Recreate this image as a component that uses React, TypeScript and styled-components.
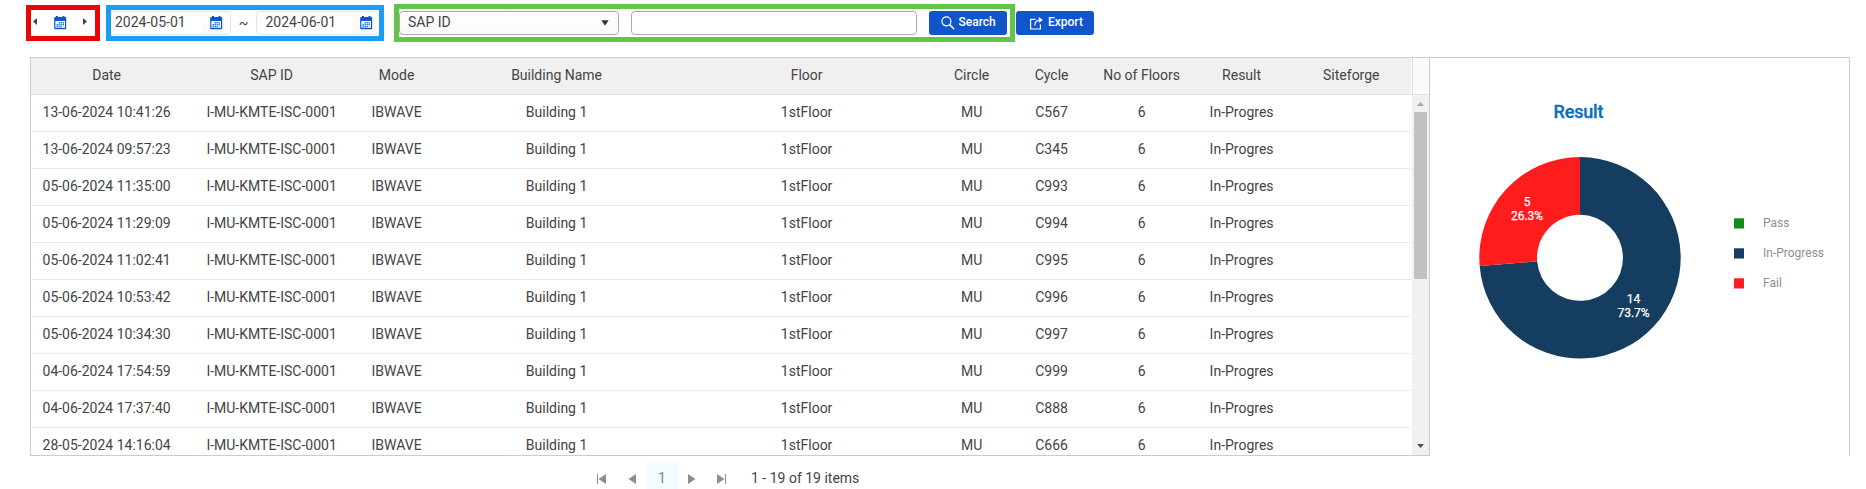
import React from "react";
import styled, { createGlobalStyle } from "styled-components";

const GlobalStyle = createGlobalStyle`
  * { box-sizing: border-box; }
  body { margin: 0; background: #fff; overflow: hidden; }
`;

const Page = styled.div`
  width: 1866px;
  height: 489px;
  font: 14px/20px Roboto, sans-serif;
  color: #444;
  overflow: hidden;
`;

const Toolbar = styled.div`
  display: flex;
  align-items: center;
  height: 46px;
  padding-left: 26px;
`;

const Group = styled.div<{ $color: string; $width: number; $height: number }>`
  display: flex;
  align-items: center;
  flex: none;
  width: ${(p) => p.$width}px;
  height: ${(p) => p.$height}px;
  border: 5px solid ${(p) => p.$color};
`;

const StepGroup = styled(Group)`
  justify-content: space-between;
  padding: 0 8px 0 2px;
  margin-right: 6px;
  svg { display: block; }
`;

const RangeGroup = styled(Group)`
  overflow: hidden;
  margin-right: 10px;
`;

const FilterGroup = styled(Group)`
  margin-right: 1px;
`;

const DateField = styled.div<{ $first?: boolean }>`
  display: flex;
  flex: none;
  width: ${(p) => (p.$first ? 120 : 126)}px;
  height: 24px;
  border: 1px solid #e6e6e6;
  border-left-width: ${(p) => (p.$first ? 0 : 1)}px;
  border-radius: ${(p) => (p.$first ? "0 4px 4px 0" : "4px")};
  overflow: hidden;
`;

const DateText = styled.span<{ $first?: boolean }>`
  flex: none;
  width: ${(p) => (p.$first ? 91 : 95)}px;
  padding-left: ${(p) => (p.$first ? 4 : 8.5)}px;
  line-height: 21px;
`;

const DateButton = styled.span`
  flex: 1;
  padding: 4px 0 0 8px;
  background: linear-gradient(#fff, #f9f9f9);
  svg { display: block; }
`;

const Tilde = styled.span`
  flex: none;
  width: 25px;
  text-align: center;
  line-height: 22px;
`;

const Select = styled.div`
  display: flex;
  align-items: center;
  justify-content: space-between;
  width: 220px;
  height: 24px;
  margin-right: 12px;
  padding: 0 9px 0 8px;
  border: 1px solid #aaa;
  border-radius: 4px;
  background: linear-gradient(#fff, #f9f9f9);
  line-height: 20px;
  span { height: 22px; }
`;

const Input = styled.input`
  width: 286px;
  height: 24px;
  margin: 0 12px 0 0;
  border: 1px solid #aaa;
  border-radius: 4px;
  background: #fff;
`;

const Button = styled.button<{ $inset: number }>`
  display: flex;
  align-items: center;
  flex: none;
  width: 78px;
  height: 24px;
  padding: 0 0 0 ${(p) => p.$inset}px;
  border: 0;
  border-radius: 3px;
  background: #1155cc;
  color: #fff;
  font: 500 12px/22px Roboto, sans-serif;
  svg { display: block; margin-right: 4px; }
  span { display: block; height: 24px; }
`;

const Panels = styled.div`
  display: flex;
  margin: 11px 0 0 30px;
  height: 399px;
`;

const Grid = styled.div`
  display: flex;
  flex-direction: column;
  width: 1400px;
  height: 399px;
  border: 1px solid #ccc;
`;

const GridHead = styled.div`
  display: flex;
  flex: none;
  height: 37px;
  border-bottom: 1px solid #e2e2e2;
  background: #fafafa;
`;

const HeadCells = styled.div`
  display: flex;
  width: 1380px;
  padding-left: 0.6px;
  background: #f0f0f0;
`;

const HeadSpacer = styled.div`
  width: 17px;
  margin-left: 1px;
  border-left: 1px solid #e2e2e2;
`;

const HeadCell = styled.div<{ $width: number }>`
  flex: none;
  width: ${(p) => p.$width}px;
  text-align: center;
  line-height: 34px;
`;

const GridBody = styled.div`
  display: flex;
  flex: 1;
  min-height: 0;
  overflow: hidden;
`;

const Rows = styled.div`
  width: 1381px;
  padding-left: 0.6px;
`;

const Row = styled.div`
  display: flex;
  height: 37px;
`;

const Cell = styled.div<{ $width: number }>`
  flex: none;
  width: ${(p) => p.$width}px;
  height: 37px;
  border-bottom: 1px solid #ebebeb;
  text-align: center;
  line-height: 35px;
`;

const ScrollTrack = styled.div`
  display: flex;
  flex-direction: column;
  align-items: center;
  justify-content: space-between;
  width: 17px;
  height: 360px;
  background: #f1f1f1;
  svg { display: block; }
`;

const ScrollThumb = styled.div`
  width: 13px;
  height: 167px;
  background: #c1c1c1;
`;

const ScrollTop = styled.div``;

const ChartPanel = styled.div`
  width: 420px;
  height: 399px;
  border-top: 1px solid #ccc;
  border-right: 1px solid #ccc;
  svg { display: block; }
`;

const Pager = styled.div`
  display: flex;
  align-items: center;
  height: 26px;
  margin: 7px 0 0 597px;
  svg { display: block; margin-top: 5px; }
`;

const PageNumber = styled.span`
  width: 32px;
  height: 26px;
  margin: 0 10px;
  background: #f3fbfe;
  color: #7a8794;
  line-height: 30px;
  text-align: center;
`;

const PageInfo = styled.span`
  margin-left: 25px;
  line-height: 30px;
  height: 26px;
  white-space: nowrap;
`;

const CalendarIcon = () => (
  <svg width="13" height="14" viewBox="0 0 13 14">
    <path d="M2 0h2v2H2zM8.500 0h2v2h-2z" fill="#1155cc" />
    <path d="M1.200 1h10a1 1 0 0 1 1 1v10.200a1 1 0 0 1-1 1h-10a1 1 0 0 1-1-1V2a1 1 0 0 1 1-1z" fill="#1155cc" />
    <path d="M1.400 5h9.600v6.800H1.400z" fill="#fff" />
    <path
      d="M4.500 6h1.500v1.500H4.500zM6.500 6H8v1.500H6.500zM8.500 6H10v1.500H8.500zM2.500 8H4v1.500H2.500zM4.500 8H6v1.500H4.500zM6.500 8H8v1.500H6.500zM8.500 8H10v1.500H8.500zM2.500 10H4v1.200H2.500zM4.500 10H6v1.200H4.500zM6.500 10H8v1.200H6.500z"
      fill="#1155cc"
      opacity=".8"
    />
  </svg>
);

const StepArrow = ({ right }: { right?: boolean }) => (
  <svg width="4" height="11" viewBox="0 0 4 11">
    <path d={right ? "M0 0v7l4-3.500z" : "M4 0v7L0 3.500z"} fill="#444" />
  </svg>
);

const SearchIcon = () => (
  <svg width="14" height="14" viewBox="0 0 14 14" fill="none" stroke="#fff" strokeLinecap="round">
    <circle cx="5.400" cy="5.300" r="4.500" strokeWidth="1.200" />
    <path d="M8.800 8.700l3.900 4" strokeWidth="1.500" />
  </svg>
);

const ExportIcon = () => (
  <svg width="14" height="14" viewBox="0 0 14 14" fill="none" stroke="#fff" strokeWidth="1.200">
    <path d="M5.500 3.400H.6v9.600h9.800V8.500" />
    <path d="M4.800 9.600C4.800 6.200 6.600 4.200 10 4.100" strokeWidth="1.200" />
    <path d="M8.800 .9v6.200l4.200-3.100z" fill="#fff" stroke="none" />
  </svg>
);

const columns: { title: string; width: number; key: string }[] = [
  { title: "Date", width: 150, key: "date" },
  { title: "SAP ID", width: 180, key: "sap" },
  { title: "Mode", width: 70, key: "mode" },
  { title: "Building Name", width: 250, key: "building" },
  { title: "Floor", width: 250, key: "floor" },
  { title: "Circle", width: 80, key: "circle" },
  { title: "Cycle", width: 80, key: "cycle" },
  { title: "No of Floors", width: 100, key: "floors" },
  { title: "Result", width: 100, key: "result" },
  { title: "Siteforge", width: 119.4, key: "siteforge" },
];

const rows: Record<string, string>[] = [
  ["13-06-2024 10:41:26", "C567"],
  ["13-06-2024 09:57:23", "C345"],
  ["05-06-2024 11:35:00", "C993"],
  ["05-06-2024 11:29:09", "C994"],
  ["05-06-2024 11:02:41", "C995"],
  ["05-06-2024 10:53:42", "C996"],
  ["05-06-2024 10:34:30", "C997"],
  ["04-06-2024 17:54:59", "C999"],
  ["04-06-2024 17:37:40", "C888"],
  ["28-05-2024 14:16:04", "C666"],
].map(([date, cycle]) => ({
  date,
  cycle,
  sap: "I-MU-KMTE-ISC-0001",
  mode: "IBWAVE",
  building: "Building 1",
  floor: "1stFloor",
  circle: "MU",
  floors: "6",
  result: "In-Progres",
  siteforge: "",
}));

const CX = 150;
const CY = 199.8;

const slicePath = (from: number, to: number) => {
  const outer = 100.7;
  const inner = 43;
  const at = (t: number, r: number) =>
    `${CX + r * Math.sin(t * 2 * Math.PI)} ${CY - r * Math.cos(t * 2 * Math.PI)}`;
  const large = to - from > 0.5 ? 1 : 0;
  return `M${at(from, outer)}A${outer} ${outer} 0 ${large} 1 ${at(to, outer)}L${at(to, inner)}A${inner} ${inner} 0 ${large} 0 ${at(from, inner)}Z`;
};

const legend = [
  { label: "Pass", color: "#168b16" },
  { label: "In-Progress", color: "#143d5f" },
  { label: "Fail", color: "#ff1c1c" },
];

const ResultChart = () => (
  <svg width="419" height="397" fontFamily="Roboto, sans-serif" fontSize="12">
    <text
      x="148.500"
      y="60"
      textAnchor="middle"
      fontSize="18"
      fontWeight="500"
      fill="#0a6dbf"
      stroke="#0a6dbf"
      strokeWidth=".3"
      textLength="50"
    >
      Result
    </text>
    <path d={slicePath(0, 14 / 19)} fill="#143d5f" />
    <path d={slicePath(14 / 19, 1)} fill="#ff1c1c" />
    <g fill="#fff" stroke="#fff" strokeWidth=".25" textAnchor="middle">
      <text x="97" y="148">5</text>
      <text x="97" y="162">26.3%</text>
      <text x="203.500" y="245">14</text>
      <text x="203.500" y="259">73.7%</text>
    </g>
    {legend.map((item, i) => (
      <g key={item.label}>
        <rect x="304" y={160.3 + i * 30} width="10" height="10.200" fill={item.color} />
        <text x="333" y={169 + i * 30} fill="#8e8e8e">
          {item.label}
        </text>
      </g>
    ))}
  </svg>
);

export default function App() {
  return (
    <Page>
      <GlobalStyle />
      <Toolbar>
        <StepGroup $color="#ea0606" $width={74} $height={36}>
          <StepArrow />
          <CalendarIcon />
          <StepArrow right />
        </StepGroup>
        <RangeGroup $color="#1a9df6" $width={278} $height={36}>
          <DateField $first>
            <DateText $first>2024-05-01</DateText>
            <DateButton>
              <CalendarIcon />
            </DateButton>
          </DateField>
          <Tilde>~</Tilde>
          <DateField>
            <DateText>2024-06-01</DateText>
            <DateButton>
              <CalendarIcon />
            </DateButton>
          </DateField>
        </RangeGroup>
        <FilterGroup $color="#61c546" $width={621} $height={38}>
          <Select>
            <span>SAP ID</span>
            <svg width="8" height="6" viewBox="0 0 8 6">
              <path d="M.3 .3h7.400L4 5.700z" fill="#333" />
            </svg>
          </Select>
          <Input />
          <Button $inset={11.5}>
            <SearchIcon />
            <span>Search</span>
          </Button>
        </FilterGroup>
        <Button $inset={14}>
          <ExportIcon />
          <span>Export</span>
        </Button>
      </Toolbar>
      <Panels>
        <Grid>
          <GridHead>
            <HeadCells>
              {columns.map((c) => (
                <HeadCell key={c.key} $width={c.width}>
                  {c.title}
                </HeadCell>
              ))}
            </HeadCells>
            <HeadSpacer />
          </GridHead>
          <GridBody>
            <Rows>
              {rows.map((r) => (
                <Row key={r.date}>
                  {columns.map((c) => (
                    <Cell key={c.key} $width={c.width}>
                      {r[c.key]}
                    </Cell>
                  ))}
                </Row>
              ))}
            </Rows>
            <ScrollTrack>
              <ScrollTop>
                <svg width="13" height="17" viewBox="0 0 13 17">
                  <path d="M3 11h7L6.500 7z" fill="#a3a3a3" />
                </svg>
                <ScrollThumb />
              </ScrollTop>
              <svg width="13" height="17" viewBox="0 0 13 17">
                <path d="M3 6h7L6.500 10z" fill="#505050" />
              </svg>
            </ScrollTrack>
          </GridBody>
        </Grid>
        <ChartPanel>
          <ResultChart />
        </ChartPanel>
      </Panels>
      <Pager>
        <svg width="39" height="10" viewBox="0 0 39 10" fill="#8e8e8e">
          <path d="M0 0h1v10H0zM9 0v10L1.500 5zM39 0v10L31.500 5z" />
        </svg>
        <PageNumber>1</PageNumber>
        <svg width="38" height="10" viewBox="0 0 38 10" fill="#8e8e8e">
          <path d="M0 0v10l7.500-5zM29 0v10l7.500-5zM37 0h1v10h-1z" />
        </svg>
        <PageInfo>1 - 19 of 19 items</PageInfo>
      </Pager>
    </Page>
  );
}
